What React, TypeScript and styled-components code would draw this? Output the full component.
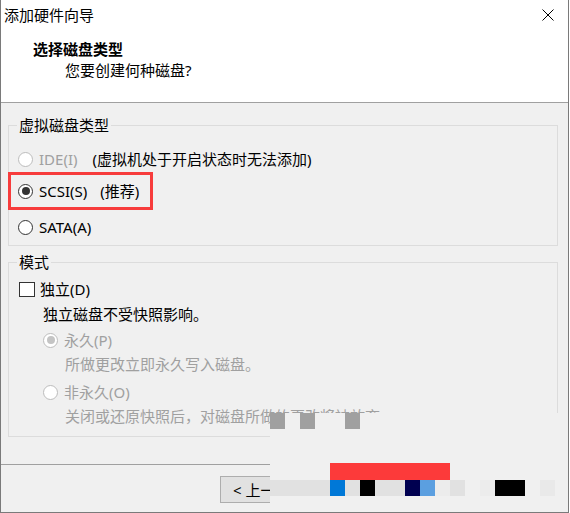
import React from "react";
import styled, { createGlobalStyle } from "styled-components";

const Global = createGlobalStyle`
  html, body { margin: 0; padding: 0; background: #ffffff; }
  body { font-family: "Noto Sans", "Noto Sans CJK SC", sans-serif; }
`;

const Win = styled.div`
  position: relative;
  width: 569px;
  height: 513px;
  box-sizing: border-box;
  border-left: 1px solid #7a7a7a;
  border-right: 1px solid #7a7a7a;
  border-bottom: 1px solid #7a7a7a;
  background: #f0f0f0;
  display: flex;
  flex-direction: column;
  font-family: "Noto Sans", "Noto Sans CJK SC", sans-serif;
  font-size: 15px;
  color: #000;
  overflow: hidden;
`;

const Header = styled.div`
  background: #fff;
  height: 103px;
  box-sizing: border-box;
  border-bottom: 1px solid #a0a0a0;
  display: flex;
  flex-direction: column;
`;

const TitleBar = styled.div`
  height: 30px;
  display: flex;
  align-items: center;
  justify-content: space-between;
  padding: 0 14px 0 3px;
  line-height: 20px;
`;

const CloseIcon = () => (
  <svg width="12" height="12" viewBox="0 0 12 12">
    <path d="M0.5 0.5 L11.5 11.5 M11.5 0.5 L0.5 11.5" stroke="#000" strokeWidth="1" fill="none" />
  </svg>
);

const PageTitle = styled.div`
  font-weight: bold;
  line-height: 20px;
  margin-top: 9px;
  padding-left: 32px;
`;

const PageSub = styled.div`
  line-height: 20px;
  margin-top: 1px;
  padding-left: 64px;
`;

const Body = styled.div`
  display: flex;
  flex-direction: column;
  padding: 0 10px 0 7px;
`;

const Group = styled.fieldset<{ $mt: number; $pb: number }>`
  margin: ${(p) => p.$mt}px 0 0 0;
  padding: 0 8px ${(p) => p.$pb}px 8px;
  border: 1px solid #dcdcdc;
  min-width: 0;
`;

const Legend = styled.legend`
  padding: 0 2px;
  line-height: 20px;
`;

const Row = styled.div<{ $mt: number; $indent?: number; $dim?: boolean }>`
  display: flex;
  align-items: center;
  height: 20px;
  line-height: 20px;
  margin-top: ${(p) => p.$mt}px;
  padding-left: ${(p) => p.$indent ?? 0}px;
  color: ${(p) => (p.$dim ? "#a0a0a0" : "#000")};
  white-space: nowrap;
`;

const Radio = styled.span<{ $checked?: boolean; $disabled?: boolean }>`
  width: 15px;
  height: 15px;
  box-sizing: border-box;
  border-radius: 50%;
  border: 1px solid ${(p) => (p.$disabled ? "#bcbcbc" : "#333333")};
  background: #fff;
  margin: 0 6px 0 1px;
  display: flex;
  align-items: center;
  justify-content: center;
  flex: none;
  &::after {
    content: "";
    display: ${(p) => (p.$checked ? "block" : "none")};
    width: 8px;
    height: 8px;
    border-radius: 50%;
    background: ${(p) => (p.$disabled ? "#c4c4c4" : "#333333")};
  }
`;

const Check = styled.span`
  width: 16px;
  height: 15px;
  box-sizing: border-box;
  border: 1px solid #333;
  background: #fff;
  margin: 0 5px 0 2px;
  flex: none;
`;

const Note = styled.span<{ $ml: number }>`
  margin-left: ${(p) => p.$ml}px;
  color: #000;
`;

const Footer = styled.div`
  margin-top: auto;
  height: 48px;
  box-sizing: border-box;
  border-top: 1px solid #a0a0a0;
  display: flex;
  justify-content: flex-end;
  align-items: flex-start;
  padding: 11px 4px 0 0;
`;

const Button = styled.div<{ $w: number; $ml?: number }>`
  width: ${(p) => p.$w}px;
  height: 27px;
  box-sizing: border-box;
  border: 1px solid #adadad;
  background: #e1e1e1;
  margin-left: ${(p) => p.$ml ?? 0}px;
  display: flex;
  align-items: center;
  padding-left: 12px;
  line-height: 20px;
  white-space: nowrap;
`;

const Annotation = styled.div`
  position: absolute;
  left: 7px;
  top: 172px;
  width: 145px;
  height: 38px;
  box-sizing: border-box;
  border: 3px solid #f73c3c;
  pointer-events: none;
`;

const Mosaic = styled.div`
  position: absolute;
  left: 269px;
  top: 413px;
  width: 301px;
  height: 100px;
  background: #f0f0f0;
  display: grid;
  grid-template-columns: repeat(20, 15px);
  grid-template-rows: 16px 34px 17px 16px;
`;

const Tile = styled.div<{ $c: number; $r: number; $span?: number; $bg: string }>`
  grid-column: ${(p) => p.$c} / span ${(p) => p.$span ?? 1};
  grid-row: ${(p) => p.$r};
  background: ${(p) => p.$bg};
`;

const tiles: { c: number; r: number; span?: number; bg: string }[] = [
  { c: 1, r: 1, bg: "#a0a0a0" },
  { c: 3, r: 1, bg: "#a0a0a0" },
  { c: 6, r: 1, bg: "#a0a0a0" },
  { c: 5, r: 3, span: 8, bg: "#fc3a3a" },
  { c: 1, r: 4, span: 4, bg: "#e1e1e1" },
  { c: 5, r: 4, bg: "#0078d7" },
  { c: 6, r: 4, bg: "#e1e1e1" },
  { c: 7, r: 4, bg: "#000000" },
  { c: 8, r: 4, span: 2, bg: "#e1e1e1" },
  { c: 10, r: 4, bg: "#000050" },
  { c: 11, r: 4, bg: "#5b9fe0" },
  { c: 12, r: 4, bg: "#ececec" },
  { c: 13, r: 4, bg: "#e1e1e1" },
  { c: 15, r: 4, bg: "#ececec" },
  { c: 16, r: 4, span: 2, bg: "#000000" },
  { c: 19, r: 4, bg: "#e9e9e9" },
];

export default function App() {
  return (
    <>
      <Global />
      <Win>
        <Header>
          <TitleBar>
            <span>添加硬件向导</span>
            <CloseIcon />
          </TitleBar>
          <PageTitle>选择磁盘类型</PageTitle>
          <PageSub>您要创建何种磁盘?</PageSub>
        </Header>
        <Body>
          <Group $mt={12} $pb={8}>
            <Legend>虚拟磁盘类型</Legend>
            <Row $mt={14} $dim>
              <Radio $disabled />
              IDE(I)
              <Note $ml={15}>(虚拟机处于开启状态时无法添加)</Note>
            </Row>
            <Row $mt={12}>
              <Radio $checked />
              SCSI(S)
              <Note $ml={13}>(推荐)</Note>
            </Row>
            <Row $mt={16}>
              <Radio />
              SATA(A)
            </Row>
          </Group>
          <Group $mt={6} $pb={10}>
            <Legend>模式</Legend>
            <Row $mt={7}>
              <Check />
              独立(D)
            </Row>
            <Row $mt={5} $indent={26}>
              独立磁盘不受快照影响。
            </Row>
            <Row $mt={6} $indent={25} $dim>
              <Radio $checked $disabled />
              永久(P)
            </Row>
            <Row $mt={4} $indent={48} $dim>
              所做更改立即永久写入磁盘。
            </Row>
            <Row $mt={8} $indent={25} $dim>
              <Radio $disabled />
              非永久(O)
            </Row>
            <Row $mt={4} $indent={48} $dim>
              关闭或还原快照后，对磁盘所做的更改将被放弃。
            </Row>
          </Group>
        </Body>
        <Footer>
          <Button $w={96}>&lt; 上一步(B)</Button>
          <Button $w={96}>下一步(N) &gt;</Button>
          <Button $w={68} $ml={8}>完成</Button>
          <Button $w={68} $ml={8}>取消</Button>
        </Footer>
        <Annotation />
        <Mosaic>
          {tiles.map((t, i) => (
            <Tile key={i} $c={t.c} $r={t.r} $span={t.span} $bg={t.bg} />
          ))}
        </Mosaic>
      </Win>
    </>
  );
}
